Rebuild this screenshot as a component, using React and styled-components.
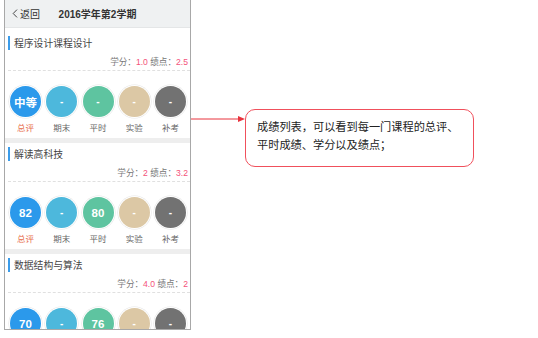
import React from "react";
import styled, { createGlobalStyle } from "styled-components";

const GlobalStyle = createGlobalStyle`
  body {
    margin: 0;
    background: #ffffff;
    font-family: "Liberation Sans", "Noto Sans CJK SC", sans-serif;
  }
`;

const Page = styled.div`
  display: flex;
  align-items: flex-start;
  padding-left: 4px;
  height: 338px;
  overflow: hidden;
`;

const Phone = styled.div`
  width: 187px;
  height: 330px;
  box-sizing: border-box;
  border: 1.5px solid #a8a8a8;
  border-top: none;
  background: #eeeeee;
  overflow: hidden;
`;

const Header = styled.div`
  height: 28px;
  display: grid;
  grid-template-columns: 1fr auto 1fr;
  align-items: center;
  background: #eff1f2;
  border-bottom: 1px solid #e4e6e7;
  box-sizing: border-box;
  color: #333;
`;

const Back = styled.div`
  display: flex;
  align-items: center;
  gap: 2px;
  padding-left: 7px;
  font-size: 10px;
`;

const Title = styled.div`
  font-size: 10px;
  font-weight: 600;
`;

const Course = styled.div`
  background: #ffffff;
  padding: ${(p) => (p.$first ? 8 : 4)}px 0 4px;
  margin-bottom: 5px;
`;

const CourseName = styled.div`
  height: 14px;
  margin-left: 3px;
  padding-left: 4px;
  border-left: 2px solid #3b9cea;
  display: flex;
  align-items: center;
  font-size: 9.8px;
  color: #444;
`;

const Credits = styled.div`
  margin-top: 6px;
  height: 12px;
  line-height: 12px;
  padding-right: 2px;
  text-align: right;
  font-size: 8.6px;
  color: #777;
  white-space: nowrap;
`;

const Value = styled.span`
  color: #f4527a;
`;

const Divider = styled.div`
  margin: 2px 0 0 3px;
  border-top: 1px dashed #e0e0e0;
`;

const Scores = styled.div`
  margin-top: 15px;
  display: flex;
  justify-content: space-between;
  padding: 0 4px 0 5px;
`;

const Score = styled.div`
  width: 31px;
  display: flex;
  flex-direction: column;
  align-items: center;
`;

const Circle = styled.div`
  width: 31px;
  height: 31px;
  border-radius: 50%;
  background: ${(p) => p.$bg};
  box-shadow: 0 0 0 1px #ffffff, 0 0 0 1.6px #e6e6e6;
  display: flex;
  align-items: center;
  justify-content: center;
  color: #ffffff;
  font-weight: 700;
  font-size: ${(p) => (p.$dash ? 10 : 11.5)}px;
`;

const Label = styled.div`
  margin-top: 5px;
  height: 12px;
  line-height: 12px;
  font-size: 8.5px;
  color: ${(p) => (p.$main ? "#e8714f" : "#666")};
`;

const Connector = styled.svg`
  margin-top: 116px;
  display: block;
  flex: none;
`;

const Note = styled.div`
  margin-top: 109px;
  width: 229px;
  height: 58px;
  box-sizing: border-box;
  border: 1px solid #f0505c;
  border-radius: 10px;
  padding: 7px 8px 0 11px;
  font-family: "Noto Sans CJK SC", sans-serif;
  font-size: 11.2px;
  line-height: 18px;
  color: #222;
  white-space: nowrap;
`;

const COLORS = ["#2b99eb", "#4db8dc", "#5ec4a0", "#dcc8a5", "#727272"];
const LABELS = ["总评", "期末", "平时", "实验", "补考"];

const courses = [
  { name: "程序设计课程设计", credit: "1.0", gpa: "2.5", scores: ["中等", "-", "-", "-", "-"] },
  { name: "解读高科技", credit: "2", gpa: "3.2", scores: ["82", "-", "80", "-", "-"] },
  { name: "数据结构与算法", credit: "4.0", gpa: "2", scores: ["70", "-", "76", "-", "-"] },
];

const App = () => {
  return (
    <Page>
      <GlobalStyle />
      <Phone>
        <Header>
          <Back>
            <svg width="6" height="9" viewBox="0 0 6 9">
              <path d="M5 0.6 L1.2 4.5 L5 8.4" fill="none" stroke="#333" strokeWidth="0.9" />
            </svg>
            返回
          </Back>
          <Title>2016学年第2学期</Title>
          <div />
        </Header>
        {courses.map((c, i) => (
          <Course key={c.name} $first={i === 0}>
            <CourseName>{c.name}</CourseName>
            <Credits>
              学分：<Value>{c.credit}</Value> 绩点：<Value>{c.gpa}</Value>
            </Credits>
            <Divider />
            <Scores>
              {c.scores.map((s, j) => (
                <Score key={j}>
                  <Circle $bg={COLORS[j]} $dash={s === "-"}>{s}</Circle>
                  <Label $main={j === 0}>{LABELS[j]}</Label>
                </Score>
              ))}
            </Scores>
          </Course>
        ))}
      </Phone>
      <Connector width="54" height="6" viewBox="0 0 54 6">
        <line x1="0" y1="3" x2="48" y2="3" stroke="#e8333d" strokeWidth="1" />
        <polygon points="47,0 54,3 47,6" fill="#e8333d" />
      </Connector>
      <Note>
        成绩列表，可以看到每一门课程的总评、
        <br />
        平时成绩、学分以及绩点；
      </Note>
    </Page>
  );
};

export default App;
